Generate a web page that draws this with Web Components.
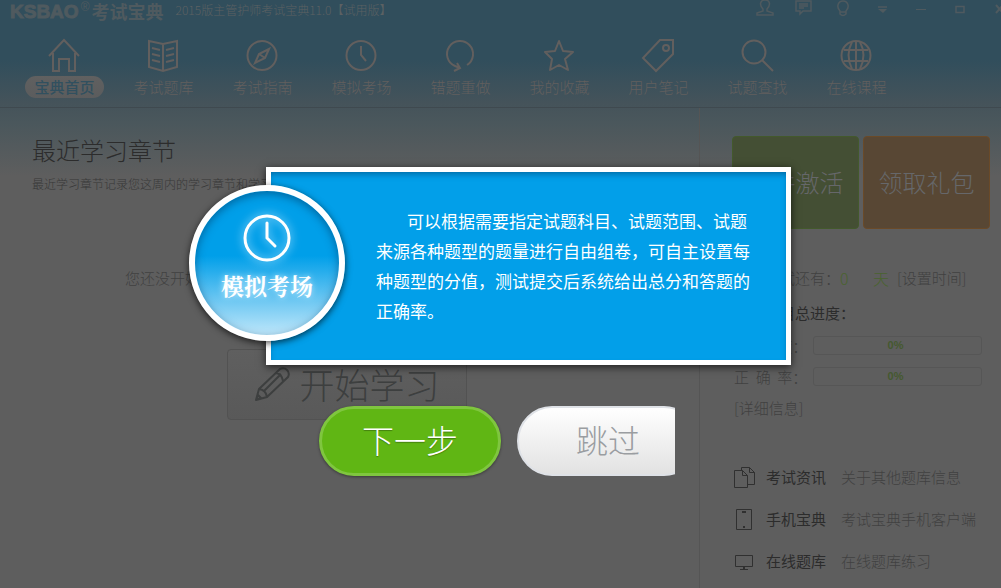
<!DOCTYPE html>
<html lang="zh-CN">
<head>
<meta charset="utf-8">
<title>考试宝典</title>
<style>
  html, body { margin: 0; min-height: 100%; }
  body {
    background: #5e5e5e;
    font-family: "Noto Sans CJK SC", "Liberation Sans", sans-serif;
    font-weight: 300;
    font-size: 15px;
    line-height: 20px;
    color: #414141;
  }
</style>
</head>
<body>
<exam-app></exam-app>

<script>
const ICONS = {
  home: '<path d="M1 17 16 1l15 16M5 14v18h6V20h10v12h6V14"/>',
  book: '<path d="M16 5 2 2v26l14 4 14-4V2zM16 5v27M5 9l8 2M5 15l8 2M5 21l8 2M27 9l-8 2M27 15l-8 2M27 21l-8 2"/>',
  compass: '<circle cx="16" cy="16.500" r="14.500"/><path d="m23 10-4 9-10 5 4-9zM13 15l6 4"/>',
  clock: '<circle cx="16" cy="16.500" r="14.500"/><path d="M16 7v9l5 6"/>',
  redo: '<path d="M23 26A13 13 0 1 0 11 27l5 2M13 24l3 5-6 3"/>',
  star: '<path d="m16 2 4 10 10 1-8 7 3 11-9-5-9 5 2-11-7-7 10-1z" stroke-linejoin="round"/>',
  tag: '<path d="M18 1h13v14L14 32 1 19z"/><circle cx="24" cy="9" r="3"/>',
  search: '<circle cx="13" cy="13" r="11.500"/><path d="m21 21 11 11"/>',
  globe: '<circle cx="16" cy="16.500" r="14.500"/><path d="M16 2v29M4 11h24M4 22h24M12 3q-7 13 0 27M20 3q7 13 0 27"/>',
};

class LineIcon extends HTMLElement {
  connectedCallback() {
    if (!this.shadowRoot) this.attachShadow({ mode: 'open' });
    this.shadowRoot.innerHTML = `
      <style>
        :host { display: block; width: 33px; height: 33px; }
        svg { display: block; width: 100%; height: 100%; fill: none; stroke: currentColor; stroke-width: 2; overflow: visible; }
      </style>
      <svg viewBox="0 0 33 33" aria-hidden="true">${ICONS[this.getAttribute('name')]}</svg>
    `;
  }
}

class TitleBar extends HTMLElement {
  constructor() {
    super();
    this.attachShadow({ mode: 'open' });
    this.shadowRoot.innerHTML = `
      <style>
        :host { display: flex; height: 22px; padding-left: 10px; color: #4f5a5f; }
        .logo { display: flex; font-weight: 700; font-size: 18px; line-height: 22px; white-space: nowrap; }
        .latin { font-family: "Liberation Sans", sans-serif; font-size: 19px; line-height: 24px; -webkit-text-stroke: 1px currentColor; }
        .reg { font: 12px/14px "Liberation Sans", sans-serif; margin: 0 2px; }
        .caption { font-size: 12px; line-height: 20px; margin-left: 12px; color: #5c6163; white-space: nowrap; }
        .tools { flex: 1; min-width: 0; display: flex; justify-content: flex-end; overflow: hidden; }
        .tools button:last-child { margin-right: -17px; }
        button { flex: none; width: 39px; height: 18px; padding: 0; border: 0; background: none; color: inherit; display: flex; justify-content: center; }
        svg { width: 18px; height: 18px; fill: none; stroke: currentColor; stroke-width: 1.500; }
      </style>
      <div class="logo"><span class="latin">KSBAO</span><span class="reg">®</span><span>考试宝典</span></div>
      <div class="caption">2015版主管护师考试宝典11.0【试用版】</div>
      <div class="tools">
        <button aria-label="用户"><svg viewBox="0 0 18 18"><path d="M7 9C3 5 4 0 9 0s6 5 2 9v2l6 2v2H1v-2l6-2z"/></svg></button>
        <button aria-label="消息"><svg viewBox="0 0 18 18"><path d="M1 1h15v10H8l-3 3v-3H1zM4 4h9M4 6h9M4 8h5"/></svg></button>
        <button aria-label="提示"><svg viewBox="0 0 18 18"><path d="M6 11C2 7 4 1 9 1s7 6 3 10v3q-3 3-6 0zM6 12h6"/></svg></button>
        <button aria-label="菜单"><svg viewBox="0 0 18 18"><path d="M5 7h9"/><path d="M5 9h9l-4 4z" fill="currentColor" stroke="none"/></svg></button>
        <button aria-label="最小化"><svg viewBox="0 0 18 18"><path d="M4 9.500h10" stroke-width="1"/></svg></button>
        <button aria-label="最大化"><svg viewBox="0 0 18 18"><path d="M5 6.500h8v6H5z"/></svg></button>
        <button aria-label="关闭"><svg viewBox="0 0 18 18"><path d="m6 5 7 8M13 5l-7 8" stroke-width="2"/></svg></button>
      </div>
    `;
  }
}

class NavItem extends HTMLElement {
  connectedCallback() {
    if (!this.shadowRoot) this.attachShadow({ mode: 'open' });
    this.shadowRoot.innerHTML = `
      <style>
        :host { display: block; flex: 0 0 99px; }
        a { display: flex; flex-direction: column; align-items: center; gap: 4px; color: #625f5e; text-decoration: none; }
        span { padding: 0 9px; line-height: 22px; border-radius: 11px; white-space: nowrap; }
        :host([active]) span { background: linear-gradient(#606060, #5b5c5d); color: #31505f; font-weight: 500; }
      </style>
      <a href="#"><line-icon name="${this.getAttribute('icon')}"></line-icon><span><slot></slot></span></a>
    `;
  }
}

class AppNav extends HTMLElement {
  constructor() {
    super();
    this.attachShadow({ mode: 'open' });
    this.shadowRoot.innerHTML = `
      <style>
        :host { display: block; border-bottom: 1px solid #3f494f; }
        nav { display: flex; padding: 17px 0 9px 15px; }
      </style>
      <nav>
        <nav-item icon="home" active>宝典首页</nav-item>
        <nav-item icon="book">考试题库</nav-item>
        <nav-item icon="compass">考试指南</nav-item>
        <nav-item icon="clock">模拟考场</nav-item>
        <nav-item icon="redo">错题重做</nav-item>
        <nav-item icon="star">我的收藏</nav-item>
        <nav-item icon="tag">用户笔记</nav-item>
        <nav-item icon="search">试题查找</nav-item>
        <nav-item icon="globe">在线课程</nav-item>
      </nav>
    `;
  }
}

class RecentChapters extends HTMLElement {
  constructor() {
    super();
    this.attachShadow({ mode: 'open' });
    this.shadowRoot.innerHTML = `
      <style>
        :host { display: block; padding: 26px 37px 0 32px; }
        h1 { margin: 0 0 8px; font-size: 24px; line-height: 32px; font-weight: 300; color: #2c2c2c; }
        .hint { margin: 0 0 74px; font-size: 12px; color: #383838; }
        .empty { margin: 0 0 61px 93px; }
        button {
          display: flex; align-items: center; justify-content: center; gap: 9px;
          width: 240px; height: 71px; margin: 0 auto; padding: 0 0 2px;
          border: 1px solid #525252; border-radius: 4px; background: linear-gradient(#5f5f5f, #595959);
          font: inherit; font-size: 35px; color: #3d3f3f;
        }
        svg { width: 36px; height: 36px; fill: none; stroke: currentColor; stroke-width: 2; stroke-linejoin: round; }
      </style>
      <h1>最近学习章节</h1>
      <p class="hint">最近学习章节记录您这周内的学习章节和学习</p>
      <p class="empty">您还没开始</p>
      <button>
        <svg viewBox="0 0 36 36" aria-hidden="true"><path d="M2 34 5 23 26 3q4-2 7 1t1 7L13 31zM5 23q7 1 8 8M10 25 27 8M22 7q6 1 7 8M2 34l5-2-3-3z"/></svg>
        开始学习
      </button>
    `;
  }
}

class ProgressRow extends HTMLElement {
  connectedCallback() {
    if (!this.shadowRoot) this.attachShadow({ mode: 'open' });
    this.shadowRoot.innerHTML = `
      <style>
        :host { display: flex; align-items: center; height: 19px; margin-bottom: 12px; }
        .label { flex: 0 0 79px; white-space: nowrap; }
        .bar {
          flex: 1; box-sizing: border-box; height: 19px; border: 1px solid #565656; border-radius: 3px;
          padding-right: 4px; text-align: center; font: 700 11px/17px "Liberation Sans", sans-serif; color: #45592f;
        }
      </style>
      <span class="label" id="label"><slot></slot></span>
      <div class="bar" role="progressbar" aria-labelledby="label" aria-valuenow="0">0%</div>
    `;
  }
}

class InfoLink extends HTMLElement {
  constructor() {
    super();
    this.attachShadow({ mode: 'open' });
    this.shadowRoot.innerHTML = `
      <style>
        :host { display: block; }
        a { display: flex; align-items: center; height: 42px; color: #414141; text-decoration: none; white-space: nowrap; }
        .icon { flex: 0 0 32px; height: 22px; color: #303030; }
        .name { flex: 0 0 75px; color: #2c2c2c; font-weight: 400; }
      </style>
      <a href="#">
        <span class="icon"><slot name="icon"></slot></span>
        <span class="name"><slot name="name"></slot></span>
        <span><slot></slot></span>
      </a>
    `;
  }
}

class SidePanel extends HTMLElement {
  constructor() {
    super();
    this.attachShadow({ mode: 'open' });
    this.shadowRoot.innerHTML = `
      <style>
        :host { display: block; padding: 28px 11px 0 32px; border-left: 1px solid #555; }
        .tiles { display: grid; grid-template-columns: 1fr 1fr; gap: 4px; margin-bottom: 39px; }
        .tiles button {
          height: 93px; padding: 0 0 2px; border: 1px solid #43592c; border-radius: 4px;
          background: #444f34; color: #66676a; font: inherit; font-size: 24px;
        }
        .tiles .gift { background: #584734; border-color: #6a4a28; }
        .body { padding: 0 8px 0 2px; }
        .days { display: flex; align-items: center; margin-bottom: 15px; white-space: nowrap; }
        .days span { width: 106px; text-align: right; }
        .days b { font-weight: 300; font-size: 16px; line-height: 20px; color: #4a6330; }
        .days .num { width: 33px; }
        .days .unit { width: 24px; }
        a { color: inherit; text-decoration: none; }
        h2 { width: 121px; margin: 0 0 13px; font-size: 15px; line-height: 20px; font-weight: 400; color: #2c2c2c; text-align: right; white-space: nowrap; }
        .more { display: block; margin: 0 0 38px; }
        svg { display: block; width: 22px; height: 22px; fill: none; stroke: currentColor; stroke-width: 1; }
      </style>
      <div class="tiles">
        <button>软件激活</button>
        <button class="gift">领取礼包</button>
      </div>
      <div class="body">
        <div class="days"><span>考试还有：</span><b class="num">0</b><b class="unit">天</b><a href="#">[设置时间]</a></div>
        <h2>科目总进度：</h2>
        <progress-row>完&nbsp;&nbsp;成&nbsp;&nbsp;度：</progress-row>
        <progress-row>正&nbsp;&nbsp;确&nbsp;&nbsp;率：</progress-row>
        <a class="more" href="#">[详细信息]</a>
        <info-link>
          <svg slot="icon" viewBox="0 0 22 22"><path d="M.5 4.500h8l5 5v12H.5zM8.500 4.500v5h5M7.500 4V1.500h8l5 5v12h-7M15.500 1.500v5h5"/></svg>
          <span slot="name">考试资讯</span>关于其他题库信息
        </info-link>
        <info-link>
          <svg slot="icon" viewBox="0 0 22 22"><path d="M2.500 1.500h15v20h-15z"/><path d="M8 3h4v2H8zM9 18h2v2H9z" fill="currentColor" stroke="none"/></svg>
          <span slot="name">手机宝典</span>考试宝典手机客户端
        </info-link>
        <info-link>
          <svg slot="icon" viewBox="0 0 22 22"><path d="M1.500 5.500h17v11h-17z"/><path d="M9 17h2v2h3v1H6v-1h3z" fill="currentColor" stroke="none"/></svg>
          <span slot="name">在线题库</span>在线题库练习
        </info-link>
      </div>
    `;
  }
}

class GuideDialog extends HTMLElement {
  constructor() {
    super();
    this.attachShadow({ mode: 'open' });
    this.shadowRoot.innerHTML = `
      <style>
        /* covers the whole window, above the app */
        :host { position: absolute; inset: 0; display: flex; justify-content: center; padding: 167px 21px 0 0; }
        .guide { width: 100%; max-width: 602px; }
        .top { display: flex; align-items: flex-start; }
        .badge {
          position: relative; z-index: 1; flex: none; box-sizing: border-box;
          width: 156px; height: 156px; margin: 18px -79px 0 0; padding-top: 22px;
          display: flex; flex-direction: column; align-items: center; gap: 10px;
          border: 6px solid #fff; border-radius: 50%; color: #fff;
          background: linear-gradient(#009fe9 45%, #5fc2f1 72%, #bfe7fa);
          box-shadow: 0 2px 7px rgba(0, 0, 0, .7), inset 0 3px 8px rgba(0, 50, 90, .5);
        }
        .badge svg { width: 50px; height: 50px; fill: none; stroke: #fff; stroke-width: 3; stroke-linecap: round; overflow: visible; filter: drop-shadow(0 0 5px #bfe9ff); }
        .badge strong { font: 700 23px/26px "Noto Serif CJK SC", "Noto Sans CJK SC", serif; text-shadow: 0 0 6px #c5ecff; white-space: nowrap; }
        .card {
          flex: 1; padding: 34px 28px 34px 105px; border: 5px solid #fff; background: #029fe9;
          box-shadow: 0 2px 8px rgba(0, 0, 0, .7), inset 0 4px 6px -2px rgba(0, 50, 90, .5);
        }
        .card p { margin: 0; font-size: 17px; line-height: 30px; font-weight: 400; color: #fff; text-indent: 31px; }
        .actions { display: flex; gap: 16px; margin: 41px 0 0 130px; }
        button { flex: none; width: 182px; height: 70px; padding: 0 0 4px; border-radius: 35px; font: inherit; font-size: 32px; }
        .next { border: 3px solid #7fc63f; background: #60b614; color: #fff; box-shadow: 0 1px 3px rgba(0, 0, 0, .4); text-shadow: 0 1px 1px rgba(0, 0, 0, .3); }
        .crop { width: 158px; overflow: hidden; }
        .skip { border: 2px solid #dfe2e7; background: linear-gradient(#fff, #e2e2e2); color: #9a9da1; }
      </style>
      <div class="guide" role="dialog">
        <div class="top">
          <div class="badge">
            <svg viewBox="0 0 50 50" aria-hidden="true"><circle cx="25" cy="25" r="22"/><path d="M25 10v15l8 8"/></svg>
            <strong>模拟考场</strong>
          </div>
          <div class="card"><p><slot></slot></p></div>
        </div>
        <div class="actions">
          <button class="next">下一步</button>
          <div class="crop"><button class="skip">跳过</button></div>
        </div>
      </div>
    `;
  }

  connectedCallback() {
    this.shadowRoot.querySelector('.skip').addEventListener('click', () => this.remove());
  }
}

class ExamApp extends HTMLElement {
  constructor() {
    super();
    this.attachShadow({ mode: 'open' });
    this.shadowRoot.innerHTML = `
      <style>
        :host {
          display: flex; flex-direction: column; min-height: 100vh; position: relative;
          background: linear-gradient(#314e5c 0, #314e5c 60px, #45535a 104px, #4a575c 122px, #5e5e5e 176px);
        }
        main { flex: 1; display: grid; grid-template-columns: 1fr 302px; }
        side-panel { box-sizing: border-box; }
      </style>
      <title-bar></title-bar>
      <app-nav></app-nav>
      <main>
        <recent-chapters></recent-chapters>
        <side-panel></side-panel>
      </main>
      <guide-dialog>可以根据需要指定试题科目、试题范围、试题来源各种题型的题量进行自由组卷，可自主设置每种题型的分值，测试提交后系统给出总分和答题的正确率。</guide-dialog>
    `;
  }
}

customElements.define('line-icon', LineIcon);
customElements.define('title-bar', TitleBar);
customElements.define('nav-item', NavItem);
customElements.define('app-nav', AppNav);
customElements.define('recent-chapters', RecentChapters);
customElements.define('progress-row', ProgressRow);
customElements.define('info-link', InfoLink);
customElements.define('side-panel', SidePanel);
customElements.define('guide-dialog', GuideDialog);
customElements.define('exam-app', ExamApp);
</script>
</body>
</html>
